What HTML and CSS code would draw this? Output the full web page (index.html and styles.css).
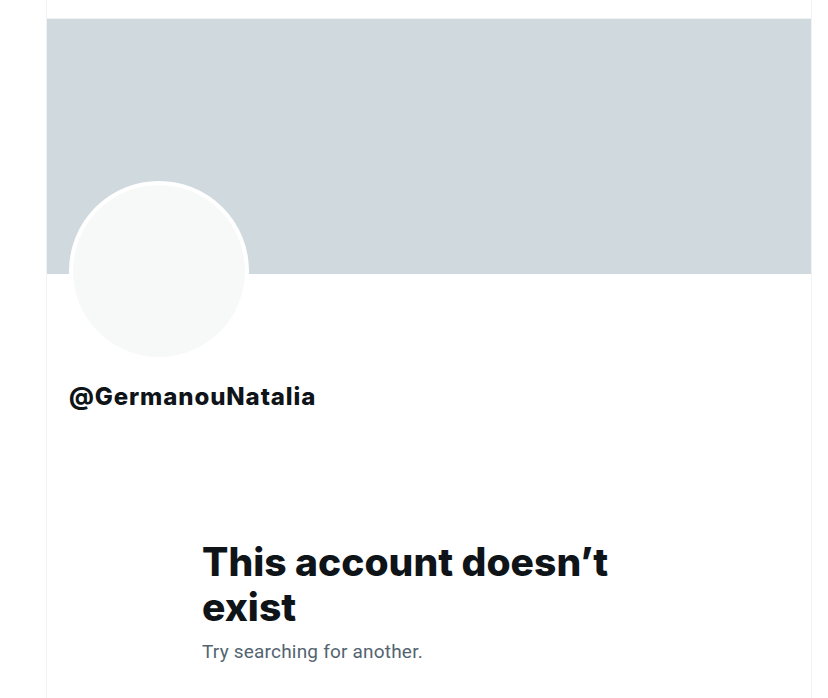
FILE: index.html
```html
<!DOCTYPE html>
<html lang="en">
<head>
  <meta charset="UTF-8" />
  <meta name="viewport" content="width=device-width, initial-scale=1.0" />
  <title>Profile</title>
  <link rel="stylesheet" href="styles.css">
</head>

<body>
  <div class="column">
    <div class="topbar"></div>
    <div class="banner"></div>

    <div class="profile">
      <div class="avatar"></div>
      <div class="handle">@GermanouNatalia</div>
    </div>

    <div class="empty">
      <div class="empty-title">This account doesn’t exist</div>
      <div class="empty-text">Try searching for another.</div>
    </div>
  </div>
</body>
</html>
```

FILE: styles.css
```css
body {
  margin: 0;
  background: #ffffff;
  font-family: 'Inter', 'Roboto', sans-serif;
  color: #0f1419;
}

.column {
  margin-left: 46px;
  width: 764px;
  min-height: 698px;
  border-left: 1px solid #eff3f4;
  border-right: 1px solid #eff3f4;
}

.topbar {
  height: 19px;
  background: #ffffff;
  border-bottom: 1px solid #eff3f4;
  box-sizing: border-box;
}

.banner {
  height: 255px;
  background: #cfd9de;
}

.profile {
  padding: 0 22px;
}

.avatar {
  width: 172px;
  height: 172px;
  margin-top: -93px;
  border-radius: 50%;
  background: #f7f9f9;
  border: 4px solid #ffffff;
}

.handle {
  margin-top: 22px;
  font-size: 24px;
  font-weight: 800;
  line-height: 28px;
  letter-spacing: 0.9px;
}

.empty {
  width: 440px;
  margin: 128px 0 0 155px;
}

.empty-title {
  font-size: 39px;
  font-weight: 800;
  line-height: 45px;
}

.empty-text {
  margin-top: 11px;
  font-family: 'Roboto', sans-serif;
  font-size: 19px;
  letter-spacing: 0.2px;
  color: #536471;
}
```
